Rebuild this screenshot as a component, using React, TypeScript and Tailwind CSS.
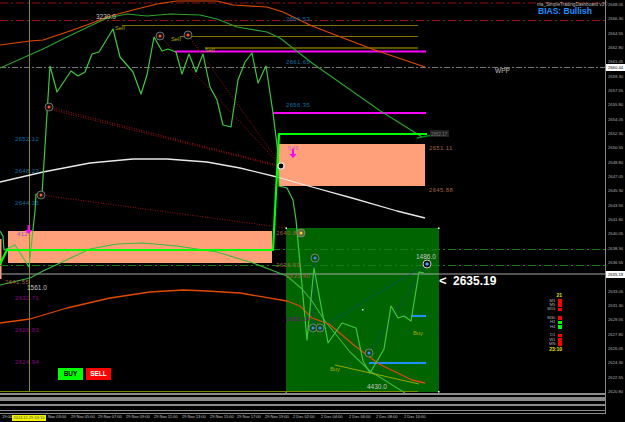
const PRICES = ['2668.05','2666.30','2664.55','2662.80','2661.05','2659.30','2657.55','2655.80','2654.05','2652.30','2650.55','2648.80','2647.05','2645.30','2643.55','2641.80','2640.05','2638.30','2636.55','2634.80','2633.05','2631.30','2629.55','2627.80','2626.05','2624.30','2622.55','2620.80'];

const TIMES = [
  ['19:00', 2], ['Nov 03:00', 48], ['29 Nov 05:00', 71], ['29 Nov 07:00', 98], ['29 Nov 09:00', 126], ['29 Nov 11:00', 154],
  ['29 Nov 13:00', 182], ['29 Nov 15:00', 210], ['29 Nov 17:00', 237], ['29 Nov 19:00', 265], ['2 Dec 02:00', 293],
  ['2 Dec 04:00', 321], ['2 Dec 06:00', 349], ['2 Dec 08:00', 376], ['2 Dec 10:00', 404],
] as const;

const ORANGE_TOP = '0,45 30,41 43,40 67,32 87,25 107,17 133,10 157,4 177,1 217,1 233,5 267,7 283,12 312,26 372,49 425,67';
const GREEN_TOP = '0,68 43,49 67,37 107,18 127,14 147,16 170,14 200,15 217,19 237,27 267,32 280,38 312,63 379,110 422,137';
const PRICE_LINE = '0,231 3,236 4,250 15,245 29,267 35,211 36,194 42,194 50,66 57,92 71,71 78,76 85,72 92,54 99,52 113,29 120,57 133,72 141,94 147,75 154,37 162,51 168,49 176,52 182,74 189,54 196,72 203,54 210,87 217,100 223,125 231,127 238,80 245,62 252,53 258,83 266,66 273,113 278,153 279,186 287,188 293,200 296,220 307,340 314,268 328,343 342,323 356,328 363,361 370,373 384,349 391,306 398,318 404,316 411,321 419,272 424,273';
const GREEN_LOW = '0,285 30,278 43,271 90,249 117,244 143,243 177,246 217,252 253,263 287,276 302,289 312,301 325,321 350,352 370,371 405,393';
const ORANGE_LOW = '0,323 30,319 67,308 110,298 150,292 183,290 207,291 240,293 287,301 300,306 312,318 329,324 355,346 379,364 412,380 425,383';
const WHITE_CURVE = '0,182 43,172 90,163 133,159 167,159 207,162 240,168 277,177 312,187 352,198 397,211 425,218';

const LABELS: [string, number, number, string][] = [
  ['2666.53', 286, 21, '#0b6fa8'], ['2661.65', 286, 64, '#0b6fa8'], ['2656.35', 286, 107, '#0b6fa8'],
  ['2652.12', 15, 141, '#0b6fa8'], ['2648.23', 15, 173, '#0b6fa8'], ['2644.35', 15, 205, '#0b6fa8'],
  ['2651.11', 429, 150, '#a0623f'], ['2645.88', 429, 192, '#a0623f'],
  ['2640.84', 276, 235, '#a0623f'], ['2636.59', 276, 267, '#a0623f'], ['2635.40', 286, 278, '#a0623f'], ['2641.55', 5, 284, '#a0623f'],
  ['2632.71', 15, 300, '#8b008b'], ['2628.83', 15, 332, '#8b008b'], ['2624.94', 15, 364, '#8b008b'], ['2630.14', 286, 321, '#8b008b'],
  ['549', 288, 150, '#c65fd0'], ['412', 17, 236, '#a050c0'],
];

const SILVER: [string, number, number][] = [['3230.0', 96, 19], ['1561.0', 27, 290], ['1486.0', 416, 259], ['4430.0', 367, 389], ['WPP', 495, 73]];
const SIGNALS: [string, number, number][] = [['Sell', 115, 30], ['Sell', 171, 41], ['Sell', 205, 52], ['Buy', 413, 335], ['Buy', 330, 371]];

const RED_MARKS = [[49, 107], [41, 195], [160, 36], [188, 35]];
const BLUE_MARKS = [[315, 258], [313, 328], [320, 328], [369, 353]];

const DASH = [
  [{ label: 'M1', on: false }, { label: 'M5', on: false }, { label: 'M15', on: false }],
  [{ label: 'M30', on: false }, { label: 'H1', on: true }, { label: 'H4', on: true }],
  [{ label: 'D1', on: false }, { label: 'W1', on: false }, { label: 'MN', on: false }],
];

function Chart() {
  return (
    <svg width={605} height={393} viewBox="0 0 605 393" className="block font-['Liberation_Sans',sans-serif]">
      {/* zones */}
      <rect x={8} y={231} width={264} height={32} fill="#ffa07a" />
      <rect x={0} y={239} width={1.5} height={40} fill="#ffa07a" />
      <rect x={279} y={144} width={146} height={42} fill="#ffa07a" />
      <rect x={286} y={228} width={153} height={164} fill="#006400" />
      <rect x={285.5} y={227.5} width={1.5} height={1.5} fill="#fff" />
      <rect x={438} y={227.5} width={1.5} height={1.5} fill="#fff" />
      <rect x={285.5} y={391} width={1.5} height={1.5} fill="#fff" />
      <rect x={438} y={391} width={1.5} height={1.5} fill="#fff" />
      <rect x={362} y={309} width={1.5} height={1.5} fill="#ddd" />

      {/* levels */}
      <g fill="none">
        <line x1={0} y1={3} x2={605} y2={3} stroke="#8c1010" strokeDasharray="8 3 2 3" />
        <line x1={0} y1={20.5} x2={605} y2={20.5} stroke="#a01010" strokeDasharray="8 3 2 3" />
        <line x1={0} y1={67.5} x2={605} y2={67.5} stroke="#777" strokeDasharray="6 2 2 2" />
        <line x1={272} y1={249.5} x2={605} y2={249.5} stroke="#128012" strokeDasharray="8 3 2 3" />
        <line x1={0} y1={265.5} x2={605} y2={265.5} stroke="#128012" strokeDasharray="8 3 2 3" />
        <line x1={0} y1={274} x2={605} y2={274} stroke="#a8a8a8" />
        <line x1={29.5} y1={0} x2={29.5} y2={392} stroke="#8a8a10" />
        <line x1={0} y1={391.5} x2={418} y2={391.5} stroke="#7a8a00" />
        <line x1={122} y1={25.5} x2={418} y2={25.5} stroke="#807000" />
        <line x1={180} y1={36.5} x2={418} y2={36.5} stroke="#807000" />
        <line x1={205} y1={48} x2={418} y2={48} stroke="#5c5200" strokeWidth={2} />
        <line x1={175} y1={51.5} x2={426} y2={51.5} stroke="#ff00ff" strokeWidth={2} />
        <line x1={273} y1={113} x2={426} y2={113} stroke="#ff00ff" strokeWidth={2} />
        <line x1={411} y1={316} x2={426} y2={316} stroke="#1e90ff" strokeWidth={2} />
        <line x1={369} y1={363} x2={426} y2={363} stroke="#1e90ff" strokeWidth={2} />
      </g>

      {/* trade links */}
      <g fill="none" stroke="#a01010" strokeDasharray="1 1.5">
        <polyline points="49,107 281,166" />
        <polyline points="49,109 281,167" />
        <polyline points="160,36 280,165" />
        <polyline points="188,35 281,165" />
        <polyline points="41,195 286,228" />
      </g>
      <g fill="none" stroke="#0a3f9a" strokeDasharray="1.5 1.5">
        <polyline points="427,264 320,328" />
        <polyline points="427,264 369,353" />
        <polyline points="315,258 313,328" />
      </g>

      {/* curves */}
      <g fill="none" strokeLinejoin="round">
        <polyline points={WHITE_CURVE} stroke="#e8e8e8" strokeWidth={1.3} />
        <polyline points={ORANGE_TOP} stroke="#e04a00" strokeWidth={1.2} />
        <polyline points={GREEN_TOP} stroke="#2aa52a" strokeWidth={1.1} />
        <polyline points={GREEN_LOW} stroke="#3cb83c" strokeWidth={1.1} />
        <polyline points={ORANGE_LOW} stroke="#e04a00" strokeWidth={1.3} />
        <polyline points="335,365 419,384" stroke="#a8b000" strokeWidth={0.9} />
        <polyline points={PRICE_LINE} stroke="#3fc83f" strokeWidth={1.2} />
        <polyline points="0,264 7,250 273,250 279,134 427,134" stroke="#00ff00" strokeWidth={2.2} />
        <polyline points="417,138 427,136 433,135" stroke="#0c8a0c" strokeWidth={1.5} />
      </g>

      {/* markers */}
      {RED_MARKS.map(([x, y]) => (
        <g key={`${x}-${y}`}>
          <circle cx={x} cy={y} r={4} fill="#111" stroke="#999" strokeWidth={0.7} />
          <circle cx={x} cy={y} r={1.5} fill="#ff5030" />
        </g>
      ))}
      <circle cx={281} cy={166} r={3} fill="#000" stroke="#eee" strokeWidth={1.2} />
      <circle cx={301} cy={233} r={4} fill="#5c6c30" stroke="#999" strokeWidth={0.7} />
      <circle cx={301} cy={233} r={1.5} fill="#ffd040" />
      {BLUE_MARKS.map(([x, y]) => (
        <g key={`${x}-${y}`}>
          <circle cx={x} cy={y} r={4} fill="#0d500d" stroke="#999" strokeWidth={0.7} />
          <circle cx={x} cy={y} r={1.5} fill="#3c8cff" />
        </g>
      ))}
      <circle cx={427} cy={264} r={4} fill="#000" stroke="#ccc" strokeWidth={1} />
      <circle cx={427} cy={264} r={1.8} fill="#4a9cff" />

      {/* arrows */}
      <path d="M292 149h2v5h2.5l-3.5 4-3.5-4h2.5z" fill="#ff00ff" />
      <path d="M27.5 225h2v5h2.5l-3.5 4-3.5-4h2.5z" fill="#ff00ff" />

      {/* labels */}
      <g fontSize={6}>
        {LABELS.map(([t, x, y, c]) => (
          <text key={t} x={x} y={y} fill={c} letterSpacing={0.35}>{t}</text>
        ))}
      </g>
      <g fontSize={6.5} fill="#c4c4c4">
        {SILVER.map(([t, x, y]) => (
          <text key={t} x={x} y={y}>{t}</text>
        ))}
      </g>
      <g fontSize={5.8} fill="#a8a800">
        {SIGNALS.map(([t, x, y]) => (
          <text key={`${t}-${x}`} x={x} y={y}>{t}</text>
        ))}
      </g>
      <rect x={430} y={130} width={19} height={7} fill="#222" />
      <text x={431} y={136} fontSize={4.5} fill="#777">2652.17</text>
      <text x={439} y={285} fontSize={13} fontWeight={700} fill="#fff">{'<'}</text>
      <text x={453} y={285} fontSize={12} fontWeight={700} fill="#fff">2635.19</text>
    </svg>
  );
}

export default function App() {
  return (
    <div className="w-[625px] h-[422px] bg-black overflow-hidden font-['Liberation_Sans',sans-serif] flex flex-col">
      <div className="flex h-[414px]">
        <div className="w-[605px] flex flex-col relative">
          <Chart />

          {/* indicator stripes */}
          <div className="flex flex-col">
            <div className="h-[2px] bg-[#8a8a8a]" />
            <div className="h-[2px]" />
            <div className="h-[4px] bg-[#8a8a8a]" />
            <div className="h-[3px]" />
            <div className="h-[2px] bg-[#8a8a8a]" />
            <div className="h-[4px]" />
            <div className="h-[1px] bg-[#8a8a8a]" />
            <div className="h-[2px]" />
            <div className="h-[1px] bg-[#8a8a8a]" />
          </div>

          {/* header */}
          <div className="absolute top-[2px] left-[537px] w-[66px]">
            <div className="text-[4.6px] leading-[5px] text-[#bbb] whitespace-nowrap">ma_SimpleTradingDashboard v3©</div>
            <div className="text-[8.5px] leading-[8px] font-bold text-[#1e90ff] whitespace-nowrap pl-[1px]">BIAS: Bullish</div>
          </div>

          {/* buy/sell */}
          <div className="absolute left-[58px] top-[368px] flex gap-[3px]">
            <button className="w-[25px] h-[12px] bg-[#00ff00] text-black text-[6.5px] font-bold leading-[12px] text-center">BUY</button>
            <button className="w-[25px] h-[12px] bg-[#ff0000] text-white text-[6.5px] font-bold leading-[12px] text-center">SELL</button>
          </div>

          {/* timeframe dashboard */}
          <div className="absolute left-[536px] top-[293px] w-[26px] flex flex-col items-end gap-[4.1px] text-[4.2px] leading-[4.4px]">
            <div className="flex flex-col items-end">
              <div className="text-[#e8e800] font-bold h-[5.7px] text-[5px] leading-[5px]">21</div>
              {DASH[0].map(row => (
                <div key={row.label} className="flex items-center justify-end h-[4.4px]">
                  <span className="text-[#b0b0b0] mr-[3px]">{row.label}</span>
                  <span className={`w-[3.6px] h-[3.6px] ${row.on ? 'bg-[#00ff00]' : 'bg-[#ff0000]'}`} />
                </div>
              ))}
            </div>
            {DASH.slice(1).map((group, i) => (
              <div key={i} className="flex flex-col items-end">
                {group.map(row => (
                  <div key={row.label} className="flex items-center justify-end h-[4.4px]">
                    <span className="text-[#b0b0b0] mr-[3px]">{row.label}</span>
                    <span className={`w-[3.6px] h-[3.6px] ${row.on ? 'bg-[#00ff00]' : 'bg-[#ff0000]'}`} />
                  </div>
                ))}
              </div>
            ))}
            <div className="text-[#e8e800] font-bold -mt-[3.6px] text-[5px] leading-[5px]">23:10</div>
          </div>
        </div>

        {/* price axis */}
        <div className="w-[20px] h-[414px] border-l border-[#888] relative">
          <div className="flex flex-col h-[395px] pt-[2px] justify-between pl-[2px] text-[4.2px] leading-[6px] text-[#b0b0b0]">
            {PRICES.map(p => (
              <span key={p}>{p}</span>
            ))}
          </div>
          <div className="absolute left-0 top-[64px] w-[19px] h-[7px] bg-white text-black text-[4.2px] leading-[7px] text-center">2660.44</div>
          <div className="absolute left-0 top-[271px] w-[19px] h-[7px] bg-white text-black text-[4.2px] leading-[7px] text-center">2635.19</div>
        </div>
      </div>

      {/* time axis */}
      <div className="relative h-[8px] text-[4px] leading-[6px] text-[#c8c8c8]">
        {TIMES.map(([t, x]) => (
          <span key={t} className="absolute top-0 whitespace-nowrap" style={{ left: x }}>{t}</span>
        ))}
        <span className="absolute top-[1px] left-[12px] w-[34px] h-[5.5px] bg-[#f0f000] text-[#555] leading-[5.5px] text-center whitespace-nowrap">2024.11.29 03:10</span>
      </div>
    </div>
  );
}
